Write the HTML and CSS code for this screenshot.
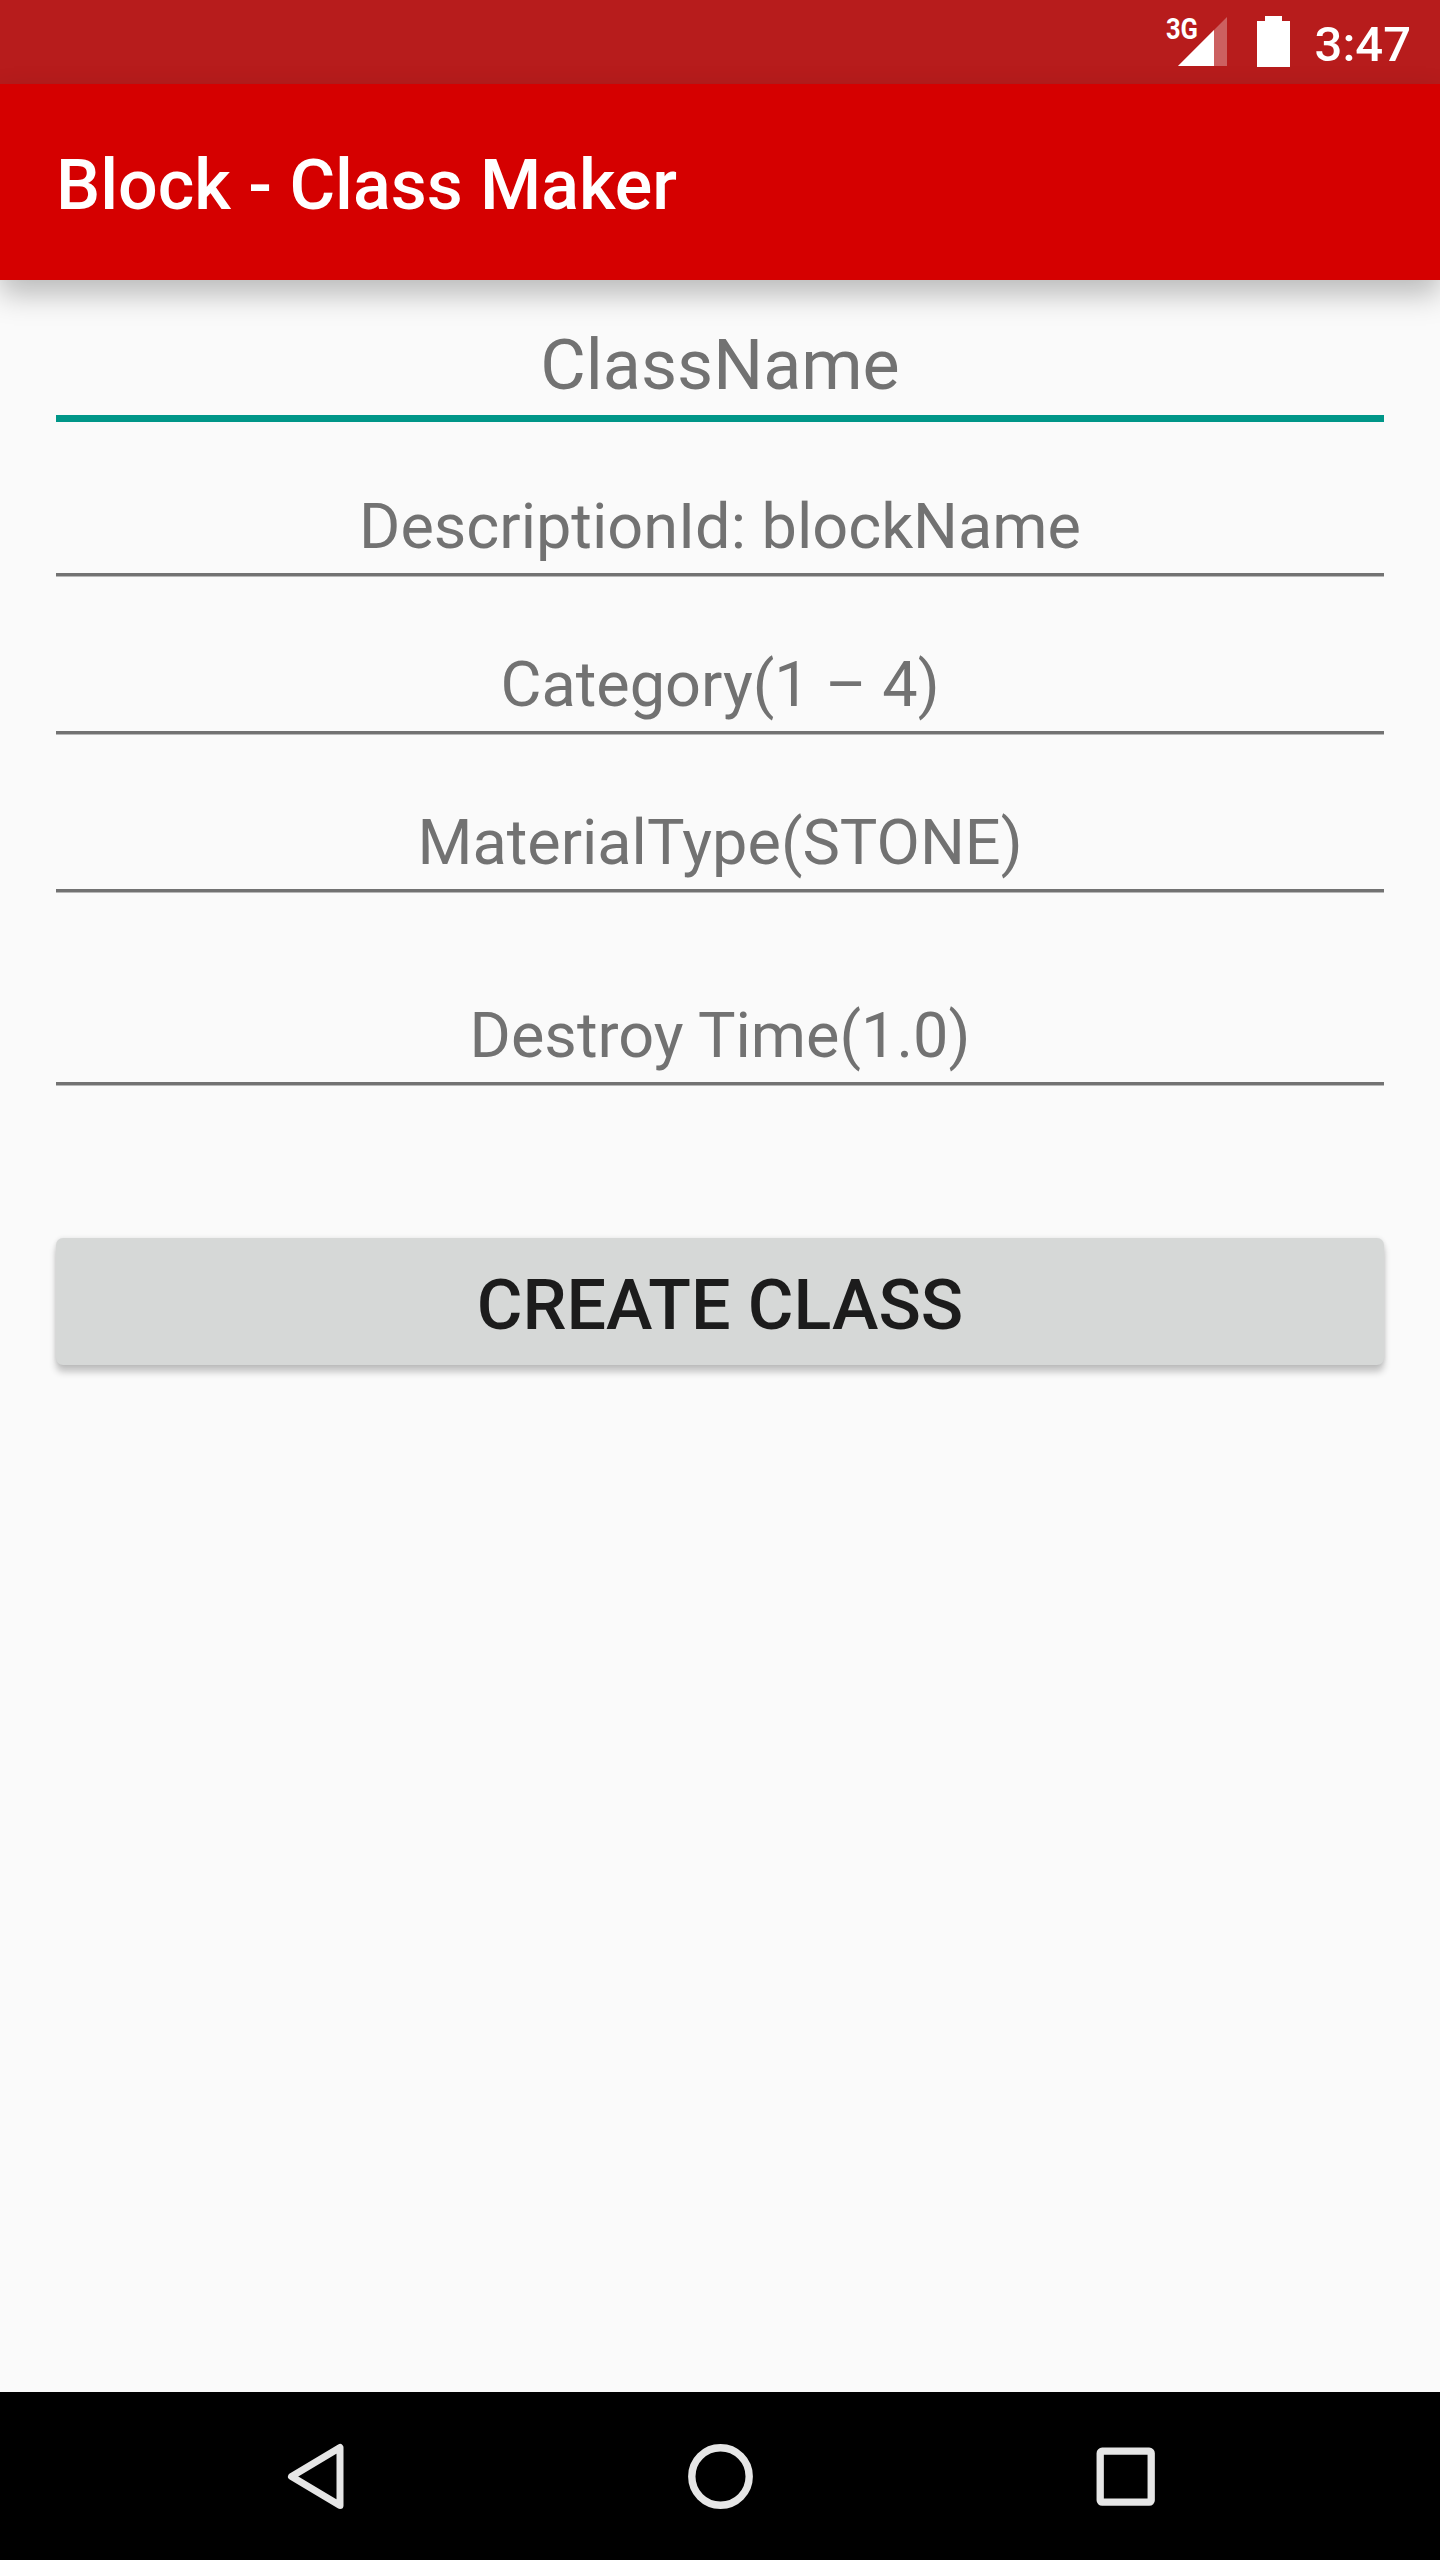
FILE: index.html
```html
<!DOCTYPE html>
<html lang="en">
<head>
    <meta charset="UTF-8">
    <meta name="viewport" content="width=device-width, initial-scale=1.0">
    <title>Block - Class Maker</title>
    <link rel="stylesheet" href="styles.css">
</head>
<body>
    <div class="screen">
        <div class="status-bar">
            <svg class="signal" width="72" height="66" viewBox="-10 -14 72 66">
                <path d="M61 1v49H12z" fill="#fff" fill-opacity="0.3"/>
                <path d="M48 14v36H12z" fill="#fff"/>
                <text class="network" x="0" y="23" textLength="32" lengthAdjust="spacingAndGlyphs">3G</text>
            </svg>
            <svg class="battery" width="33" height="51" viewBox="0 0 33 51">
                <path d="M8 0h17v5h8v46H0V5h8z" fill="#fff"/>
            </svg>
            <span class="clock">3:47</span>
        </div>
        <header class="app-bar">
            <h1 class="title">Block - Class Maker</h1>
        </header>
        <main class="form">
            <div class="field focused">ClassName</div>
            <div class="field">DescriptionId: blockName</div>
            <div class="field">Category(1 – 4)</div>
            <div class="field">MaterialType(STONE)</div>
            <div class="field spaced">Destroy Time(1.0)</div>
            <button class="create-button">CREATE CLASS</button>
        </main>
        <nav class="nav-bar">
            <svg width="72" height="72" viewBox="0 0 72 72">
                <path d="M61 7.5v58L12.5 36.5z" fill="none" stroke="#e6e6e6" stroke-width="7" stroke-linejoin="round"/>
            </svg>
            <svg width="72" height="72" viewBox="0 0 72 72">
                <circle cx="36.5" cy="36.5" r="28.7" fill="none" stroke="#e6e6e6" stroke-width="7.4"/>
            </svg>
            <svg width="72" height="72" viewBox="0 0 72 72">
                <rect x="11.2" y="11.2" width="51" height="51" rx="2" fill="none" stroke="#e6e6e6" stroke-width="7.3"/>
            </svg>
        </nav>
    </div>
</body>
</html>
```

FILE: styles.css
```css
body {
    margin: 0;
    font-family: Roboto, sans-serif;
    background: #fafafa;
}

.screen {
    display: flex;
    flex-direction: column;
    width: 1440px;
    height: 2560px;
    overflow: hidden;
}

.status-bar {
    display: flex;
    align-items: flex-start;
    height: 84px;
    padding-right: 29px;
    box-sizing: border-box;
    justify-content: flex-end;
    background: #b71c1c;
    color: #fff;
}

.signal {
    margin-top: 2px;
}

.network {
    font-size: 29px;
    font-weight: 700;
    fill: #fff;
}

.battery {
    margin: 16px 25px 0 29px;
}

.clock {
    margin-top: 16px;
    font-size: 49px;
    font-weight: 500;
    line-height: 58px;
}

.app-bar {
    display: flex;
    align-items: center;
    height: 196px;
    padding: 6px 56px 0;
    box-sizing: border-box;
    background: #d50000;
    box-shadow: 0 14px 28px rgba(0, 0, 0, 0.26);
}

.title {
    margin: 0;
    font-size: 70px;
    font-weight: 500;
    line-height: 82px;
    color: #fff;
}

.form {
    flex: 1;
    display: flex;
    flex-direction: column;
    padding: 0 56px;
}

.field {
    padding: 70px 0 7px;
    border-bottom: 3px solid #727272;
    box-shadow: 0 1px #b8b8b8; /* soft lower edge of the line */
    font-size: 63px;
    line-height: 78px;
    text-align: center;
    color: #727272;
}

.field.focused {
    padding: 44px 0 9px;
    margin-bottom: -4px;
    border-bottom: 7px solid #009688;
    box-shadow: none;
    font-size: 70px;
    line-height: 82px;
}

.field.spaced {
    padding-top: 105px;
}

.create-button {
    margin-top: 153px;
    height: 127px;
    padding: 6px 0 0;
    border: none;
    border-radius: 7px;
    background: #d6d8d7;
    box-shadow: 0 7px 7px rgba(0, 0, 0, 0.22), 0 0 4px rgba(0, 0, 0, 0.1);
    font-family: inherit;
    font-size: 70px;
    font-weight: 500;
    line-height: 82px;
    color: #1c1c1c;
}

.nav-bar {
    display: flex;
    justify-content: space-between;
    align-items: center;
    height: 168px;
    padding: 0 279px;
    box-sizing: border-box;
    background: #000;
}
```
